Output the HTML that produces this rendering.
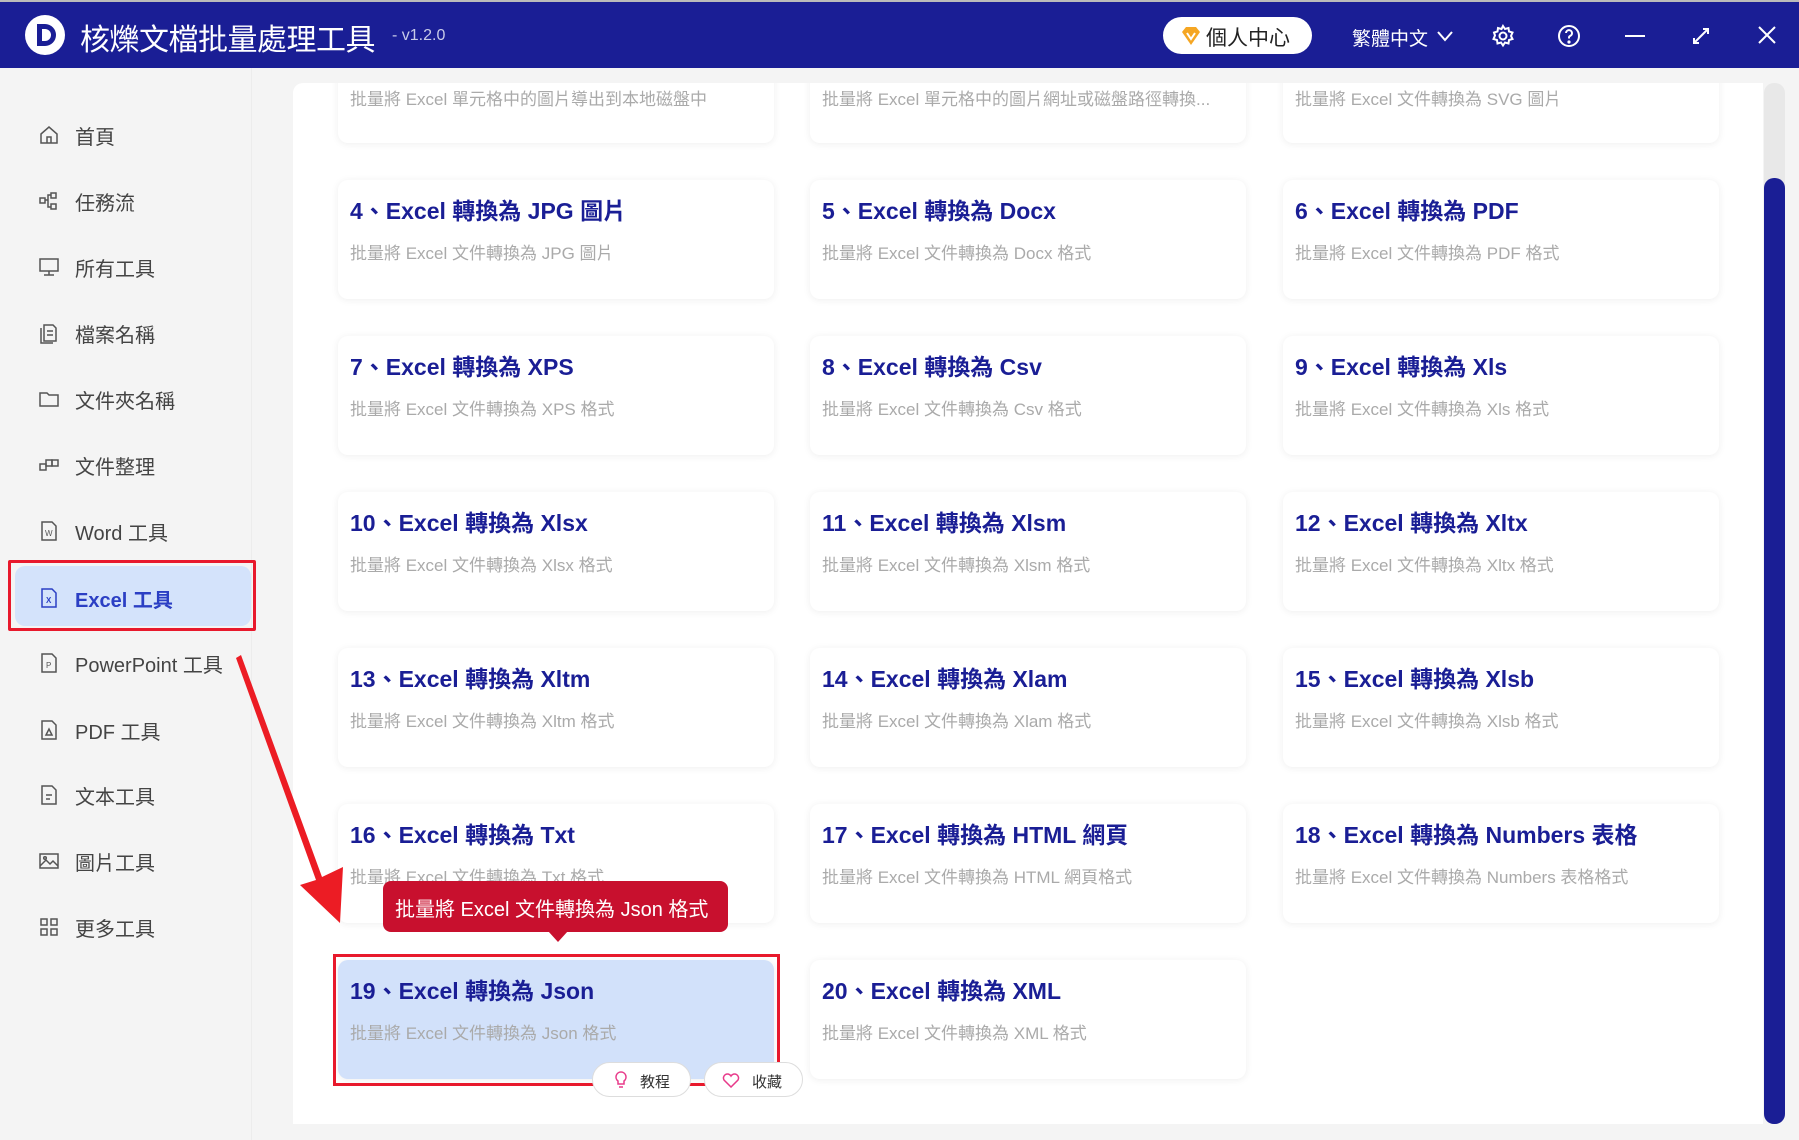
<!DOCTYPE html>
<html><head><meta charset="utf-8"><style>
*{margin:0;padding:0;box-sizing:border-box}
body{width:1799px;height:1140px;overflow:hidden;background:#f4f4f4;font-family:"Liberation Sans","Noto Sans CJK TC",sans-serif;position:relative}
.hdr{position:absolute;left:0;top:0;width:1799px;height:68px;background:#1a1e95;border-top:2px solid #bbb}
.abs{position:absolute}
.side{position:absolute;left:0;top:68px;width:252px;height:1072px;border-right:1px solid #ececec}
.si{position:absolute;left:38px;height:30px;display:flex;align-items:center;font-size:20px;color:#444}
.si svg{width:22px;height:22px;margin-right:15px}
.panel{position:absolute;left:293px;top:83px;width:1470px;height:1041px;background:#fff;border-radius:10px 0 0 0;overflow:hidden}
.card{position:absolute;width:436px;height:119px;background:#fff;border-radius:10px;box-shadow:0 1px 8px rgba(0,0,0,0.07)}
.card .t{position:absolute;left:12px;top:12px;font-size:23px;font-weight:bold;color:#1a1e95;white-space:nowrap}
.card .d{position:absolute;left:12px;top:59px;font-size:17px;color:#aaa;white-space:nowrap}
</style></head><body>
<div class="hdr">
 <svg class="abs" style="left:24px;top:12px" width="42" height="42" viewBox="0 0 42 42"><circle cx="21" cy="21" r="20" fill="#fff"/><path d="M13 10h8a11 11 0 0 1 0 22h-8z" fill="#1a1e95"/><path d="M18 15h3a6 6 0 0 1 0 12h-3z" fill="#fff"/></svg>
 <div class="abs" style="left:80px;top:13px;font-size:30px;color:#fff;letter-spacing:-0.5px">核爍文檔批量處理工具</div>
 <div class="abs" style="left:392px;top:25px;font-size:16px;color:#c8cbe8">- v1.2.0</div>
 <div class="abs" style="left:1163px;top:15px;width:149px;height:37px;background:#fff;border-radius:19px;"></div>
 <svg class="abs" style="left:1180px;top:24px" width="22" height="20" viewBox="0 0 22 20"><path d="M2 6l4-5h10l4 5-9 13z" fill="#f5a623"/><path d="M7 7l4 6 4-6" stroke="#fff" stroke-width="2" fill="none"/></svg>
 <div class="abs" style="left:1206px;top:20px;font-size:21px;color:#222">個人中心</div>
 <div class="abs" style="left:1352px;top:22px;font-size:19px;color:#fff">繁體中文</div>
 <svg class="abs" style="left:1436px;top:27px" width="18" height="14"><path d="M2 3l7 8 7-8" stroke="#fff" stroke-width="2" fill="none"/></svg>
 <svg class="abs" style="left:1491px;top:22px" width="24" height="24" viewBox="0 0 24 24" fill="none" stroke="#fff" stroke-width="2"><circle cx="12" cy="12" r="3.5"/><path d="M12 2l2 3 3.5-1 .5 3.5 3.5 1-1.5 3.5 1.5 3-3.5 1-.5 3.5-3.5-1-2 3-2-3-3.5 1-.5-3.5-3.5-1 1.5-3.5L3 8.5l3.5-1L7 4l3.5 1z"/></svg>
 <svg class="abs" style="left:1557px;top:22px" width="24" height="24" fill="none" stroke="#fff" stroke-width="2"><circle cx="12" cy="12" r="10"/><path d="M9 9a3 3 0 1 1 4 3c-1 .5-1 1-1 2.5"/><circle cx="12" cy="18" r="0.6" fill="#fff"/></svg>
 <div class="abs" style="left:1625px;top:33px;width:20px;height:2px;background:#fff"></div>
 <svg class="abs" style="left:1690px;top:23px" width="22" height="22" fill="none" stroke="#fff" stroke-width="2"><path d="M4 18L18 4M13 4h5v5M4 13v5h5"/></svg>
 <svg class="abs" style="left:1757px;top:23px" width="20" height="20" stroke="#fff" stroke-width="2"><path d="M2 2l16 16M18 2L2 18"/></svg>
</div>

<div class="side">
 <div style="position:absolute;left:15px;top:498px;width:236px;height:60px;background:#d4e3fb;border-radius:10px"></div>
</div>
<div style="position:absolute;left:8px;top:560px;width:248px;height:71px;border:3px solid #e8192c;border-radius:2px"></div>
<div class="si" style="top:120px"><svg viewBox="0 0 22 22" fill="none" stroke="#555" stroke-width="1.5"><path d="M3 10l8-7 8 7v9H3zM9 19v-6h4v6"/></svg>首頁</div>
<div class="si" style="top:186px"><svg viewBox="0 0 22 22" fill="none" stroke="#555" stroke-width="1.5"><rect x="2" y="8" width="5" height="5"/><rect x="13" y="3" width="5" height="5"/><rect x="13" y="14" width="5" height="5"/><path d="M7 10h3v-5h3M10 10v7h3"/></svg>任務流</div>
<div class="si" style="top:252px"><svg viewBox="0 0 22 22" fill="none" stroke="#555" stroke-width="1.5"><rect x="2" y="3" width="18" height="12"/><path d="M11 15v4M6 19h10"/></svg>所有工具</div>
<div class="si" style="top:318px"><svg viewBox="0 0 22 22" fill="none" stroke="#555" stroke-width="1.5"><path d="M6 3h9l3 3v13H6zM3 6v15h12M9 9h6M9 13h6"/></svg>檔案名稱</div>
<div class="si" style="top:384px"><svg viewBox="0 0 22 22" fill="none" stroke="#555" stroke-width="1.5"><path d="M2 5h7l2 2h9v11H2z"/></svg>文件夾名稱</div>
<div class="si" style="top:450px"><svg viewBox="0 0 22 22" fill="none" stroke="#555" stroke-width="1.5"><rect x="2" y="10" width="6" height="6"/><rect x="8" y="6" width="6" height="6"/><rect x="14" y="6" width="6" height="6"/></svg>文件整理</div>
<div class="si" style="top:516px"><svg viewBox="0 0 22 22" fill="none" stroke="#555" stroke-width="1.5"><path d="M4 2h10l4 4v14H4z"/><text x="7" y="16" font-size="8" fill="#555" stroke="none">W</text></svg>Word 工具</div>
<div class="si" style="top:583px;color:#2b3fc4;font-weight:bold"><svg viewBox="0 0 22 22" fill="none" stroke="#2b3fc4" stroke-width="1.5"><path d="M4 2h10l4 4v14H4z"/><text x="8" y="16" font-size="8" fill="#2b3fc4" stroke="none">X</text></svg>Excel 工具</div>
<div class="si" style="top:648px"><svg viewBox="0 0 22 22" fill="none" stroke="#555" stroke-width="1.5"><path d="M4 2h10l4 4v14H4z"/><text x="8" y="16" font-size="8" fill="#555" stroke="none">P</text></svg>PowerPoint 工具</div>
<div class="si" style="top:715px"><svg viewBox="0 0 22 22" fill="none" stroke="#555" stroke-width="1.5"><path d="M4 2h10l4 4v14H4zM8 16l3-6 3 6z"/></svg>PDF 工具</div>
<div class="si" style="top:780px"><svg viewBox="0 0 22 22" fill="none" stroke="#555" stroke-width="1.5"><path d="M4 2h10l4 4v14H4zM8 11h6M8 15h4"/></svg>文本工具</div>
<div class="si" style="top:846px"><svg viewBox="0 0 22 22" fill="none" stroke="#555" stroke-width="1.5"><rect x="2" y="4" width="18" height="14"/><path d="M2 16l6-6 4 4 3-3 5 5"/><circle cx="7" cy="8" r="1.3"/></svg>圖片工具</div>
<div class="si" style="top:912px"><svg viewBox="0 0 22 22" fill="none" stroke="#555" stroke-width="1.5"><rect x="3" y="3" width="6" height="6"/><rect x="13" y="3" width="6" height="6"/><rect x="3" y="13" width="6" height="6"/><rect x="13" y="13" width="6" height="6"/></svg>更多工具</div>

<div class="panel">
 <div class="card" style="left:45px;top:-59px"><div class="d" style="top:61px">批量將 Excel 單元格中的圖片導出到本地磁盤中</div></div>
 <div class="card" style="left:517px;top:-59px"><div class="d" style="top:61px">批量將 Excel 單元格中的圖片網址或磁盤路徑轉換...</div></div>
 <div class="card" style="left:990px;top:-59px"><div class="d" style="top:61px">批量將 Excel 文件轉換為 SVG 圖片</div></div>

 <div class="card" style="left:45px;top:97px"><div class="t">4、Excel 轉換為 JPG 圖片</div><div class="d">批量將 Excel 文件轉換為 JPG 圖片</div></div>
 <div class="card" style="left:517px;top:97px"><div class="t">5、Excel 轉換為 Docx</div><div class="d">批量將 Excel 文件轉換為 Docx 格式</div></div>
 <div class="card" style="left:990px;top:97px"><div class="t">6、Excel 轉換為 PDF</div><div class="d">批量將 Excel 文件轉換為 PDF 格式</div></div>

 <div class="card" style="left:45px;top:253px"><div class="t">7、Excel 轉換為 XPS</div><div class="d">批量將 Excel 文件轉換為 XPS 格式</div></div>
 <div class="card" style="left:517px;top:253px"><div class="t">8、Excel 轉換為 Csv</div><div class="d">批量將 Excel 文件轉換為 Csv 格式</div></div>
 <div class="card" style="left:990px;top:253px"><div class="t">9、Excel 轉換為 Xls</div><div class="d">批量將 Excel 文件轉換為 Xls 格式</div></div>

 <div class="card" style="left:45px;top:409px"><div class="t">10、Excel 轉換為 Xlsx</div><div class="d">批量將 Excel 文件轉換為 Xlsx 格式</div></div>
 <div class="card" style="left:517px;top:409px"><div class="t">11、Excel 轉換為 Xlsm</div><div class="d">批量將 Excel 文件轉換為 Xlsm 格式</div></div>
 <div class="card" style="left:990px;top:409px"><div class="t">12、Excel 轉換為 Xltx</div><div class="d">批量將 Excel 文件轉換為 Xltx 格式</div></div>

 <div class="card" style="left:45px;top:565px"><div class="t">13、Excel 轉換為 Xltm</div><div class="d">批量將 Excel 文件轉換為 Xltm 格式</div></div>
 <div class="card" style="left:517px;top:565px"><div class="t">14、Excel 轉換為 Xlam</div><div class="d">批量將 Excel 文件轉換為 Xlam 格式</div></div>
 <div class="card" style="left:990px;top:565px"><div class="t">15、Excel 轉換為 Xlsb</div><div class="d">批量將 Excel 文件轉換為 Xlsb 格式</div></div>

 <div class="card" style="left:45px;top:721px"><div class="t">16、Excel 轉換為 Txt</div><div class="d">批量將 Excel 文件轉換為 Txt 格式</div></div>
 <div class="card" style="left:517px;top:721px"><div class="t">17、Excel 轉換為 HTML 網頁</div><div class="d">批量將 Excel 文件轉換為 HTML 網頁格式</div></div>
 <div class="card" style="left:990px;top:721px"><div class="t">18、Excel 轉換為 Numbers 表格</div><div class="d">批量將 Excel 文件轉換為 Numbers 表格格式</div></div>

 <div class="card" style="left:45px;top:877px;background:#d2e1fa"><div class="t">19、Excel 轉換為 Json</div><div class="d">批量將 Excel 文件轉換為 Json 格式</div></div>
 <div class="card" style="left:517px;top:877px"><div class="t">20、Excel 轉換為 XML</div><div class="d">批量將 Excel 文件轉換為 XML 格式</div></div>
</div>
<div class="abs" style="left:1764px;top:83px;width:21px;height:1041px;background:#e8e8e8;border-radius:10px"></div>
<div class="abs" style="left:1764px;top:178px;width:21px;height:946px;background:#1a1e95;border-radius:10px"></div>

<div class="abs" style="left:333px;top:954px;width:447px;height:132px;border:3px solid #e8192c"></div>
<div class="abs" style="left:592px;top:1062px;width:99px;height:35px;background:#fff;border:1px solid #ddd;border-radius:18px;font-size:15px;color:#333;padding:8px 0 0 47px">教程</div>
<svg class="abs" style="left:614px;top:1071px" width="14" height="18" viewBox="0 0 14 18" fill="none" stroke="#e83a8a" stroke-width="1.5"><path d="M7 1a5 5 0 0 0-3 9v3h6v-3a5 5 0 0 0-3-9zM5 16h4"/></svg>
<div class="abs" style="left:704px;top:1062px;width:99px;height:35px;background:#fff;border:1px solid #ddd;border-radius:18px;font-size:15px;color:#333;padding:8px 0 0 47px">收藏</div>
<svg class="abs" style="left:722px;top:1073px" width="18" height="15" viewBox="0 0 18 15" fill="none" stroke="#e83a8a" stroke-width="1.5"><path d="M9 14L2 7a3.8 3.8 0 0 1 7-4 3.8 3.8 0 0 1 7 4z"/></svg>

<div class="abs" style="left:383px;top:881px;width:345px;height:51px;background:#c8102e;border-radius:8px;color:#fff;font-size:20px;padding:12px 0 0 12px;white-space:nowrap">批量將 Excel 文件轉換為 Json 格式</div>
<div class="abs" style="left:548px;top:931px;width:0;height:0;border-left:10px solid transparent;border-right:10px solid transparent;border-top:11px solid #c8102e"></div>

<svg class="abs" style="left:0;top:0" width="1799" height="1140"><path d="M236 658L241 655L322 877L343 867L340 923L300 885L316 880Z" fill="#ec1c24"/></svg>
</body></html>
